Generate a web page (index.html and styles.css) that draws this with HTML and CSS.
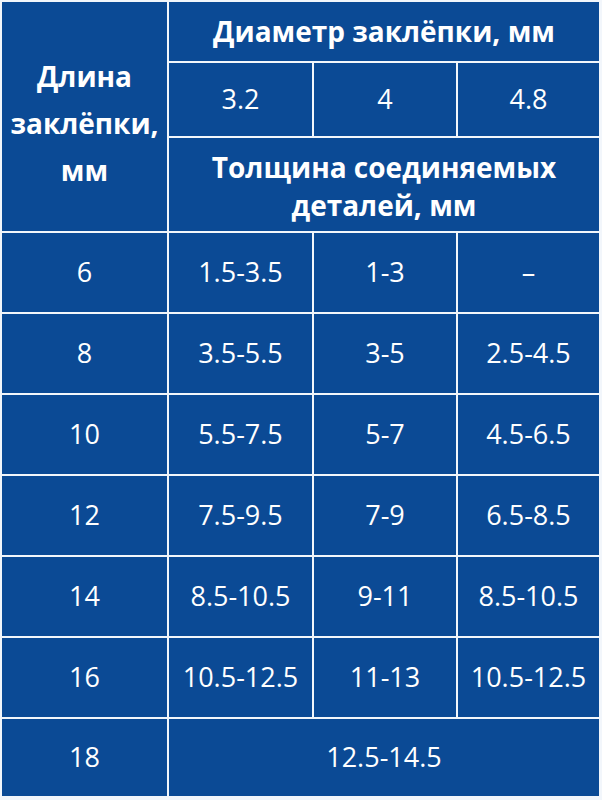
FILE: index.html
```html
<!DOCTYPE html>
<html lang="ru">
<head>
<meta charset="utf-8">
<title>Таблица заклёпок</title>
<link rel="stylesheet" href="styles.css">
</head>
<body>
<div class="table">
  <div class="cell head len">Длина<br>заклёпки,<br>мм</div>
  <div class="cell head span3">Диаметр заклёпки, мм</div>
  <div class="cell">3.2</div>
  <div class="cell">4</div>
  <div class="cell">4.8</div>
  <div class="cell head span3 thick">Толщина соединяемых<br>деталей, мм</div>

  <div class="cell">6</div><div class="cell">1.5-3.5</div><div class="cell">1-3</div><div class="cell">–</div>
  <div class="cell">8</div><div class="cell">3.5-5.5</div><div class="cell">3-5</div><div class="cell">2.5-4.5</div>
  <div class="cell">10</div><div class="cell">5.5-7.5</div><div class="cell">5-7</div><div class="cell">4.5-6.5</div>
  <div class="cell">12</div><div class="cell">7.5-9.5</div><div class="cell">7-9</div><div class="cell">6.5-8.5</div>
  <div class="cell">14</div><div class="cell">8.5-10.5</div><div class="cell">9-11</div><div class="cell">8.5-10.5</div>
  <div class="cell">16</div><div class="cell">10.5-12.5</div><div class="cell">11-13</div><div class="cell">10.5-12.5</div>
  <div class="cell">18</div><div class="cell span3">12.5-14.5</div>
</div>
</body>
</html>
```
FILE: styles.css
```css
html, body {
  margin: 0;
  padding: 0;
  background: #ffffff;
}

.table {
  display: grid;
  grid-template-columns: 165px 143px 142px 141px;
  grid-template-rows: 59px 73px 93px repeat(6, 79px) 77px;
  gap: 2px;
  padding: 2px 3px 4px 2px;
  width: 597px;
  background: #f2f6fb;
  font-family: "Open Sans", "DejaVu Sans", sans-serif;
  color: #ffffff;
}

.cell {
  background: #0b4a95;
  display: flex;
  align-items: center;
  justify-content: center;
  text-align: center;
  font-size: 27px;
  font-weight: 400;
  line-height: 1.2;
}

.head {
  font-weight: 700;
  font-size: 28px;
}

.len {
  grid-row: 1 / span 3;
  line-height: 47px;
  padding-top: 14px;
}

.span3 {
  grid-column: 2 / span 3;
}

.thick {
  line-height: 38px;
  padding-top: 2px;
}
```
